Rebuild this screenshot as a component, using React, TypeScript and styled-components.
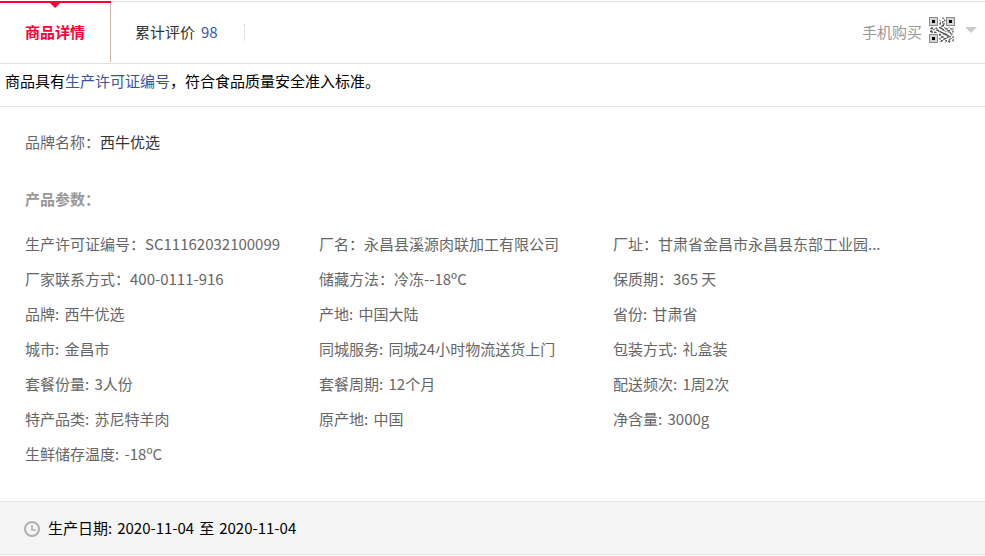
import React from 'react';
import styled, { createGlobalStyle } from 'styled-components';

const GlobalStyle = createGlobalStyle`
  * { box-sizing: border-box; }
  body {
    margin: 0;
    background: #fff;
    color: #000;
    font: 15px/20px 'Noto Sans CJK SC', 'Noto Sans', sans-serif;
  }
  button { font: inherit; background: none; border: 0; padding: 0; cursor: pointer; }
  a { text-decoration: none; }
`;

const Page = styled.main`
  padding-top: 1px;
`;

const TabBar = styled.nav`
  display: flex;
  height: 63px;
  border-top: 1px solid #e0e0e0;
  border-bottom: 1px solid #e0e0e0;
`;

const ActiveTab = styled.button`
  position: relative;
  width: 111px;
  margin-top: -1px;
  && {
    padding: 0 1px 2px 0;
    border-top: 2px solid #ff0036;
    color: #ff0036;
    font-weight: 700;
  }
  &::before {
    content: '';
    position: absolute;
    top: 0;
    left: 50%;
    margin-left: -6px;
    border: 5px solid transparent;
    border-top-color: #ff0036;
    border-bottom: 0;
  }
  &::after {
    content: '';
    position: absolute;
    top: 1px;
    right: 0;
    bottom: 1px;
    width: 1px;
    background: #cbb8ab;
  }
`;

const Tab = styled.button`
  display: flex;
  gap: 6px;
  align-items: center;
  align-self: center;
  height: 18px;
  && {
    padding: 0 26px 2px 24px;
    color: #333;
    border-right: 1px dotted #ccc;
  }
`;

const Count = styled.span`
  color: #38549f;
`;

const PhoneBuy = styled.button`
  display: flex;
  align-items: center;
  margin-left: auto;
  && {
    padding: 0 8px 2px 0;
    color: #999;
  }
`;

const QrIcon = styled.svg`
  width: 26px;
  height: 26px;
  margin: 0 10px 3px 7px;
`;

const Caret = styled.span`
  margin-bottom: 3px;
  border: 6px solid transparent;
  border-top-color: #ccc;
  border-bottom: 0;
`;

const Notice = styled.p`
  margin: 0;
  padding: 7px 5px 15px;
  border-bottom: 1px solid #e6e6e6;
`;

const NoticeLink = styled.a`
  color: #38549f;
`;

const Details = styled.section`
  padding: 25px 25px 30px;
  color: #666;
`;

const Brand = styled.p`
  margin: 0 0 37px;
`;

const BrandName = styled.span`
  color: #333;
`;

const Heading = styled.h2`
  margin: 0 0 17px;
  color: #999;
  font-size: 15px;
  line-height: 20px;
`;

const Params = styled.ul`
  display: grid;
  grid-template-columns: repeat(3, minmax(0, 270px));
  column-gap: 24px;
  margin: 0;
  padding: 0;
  list-style: none;
`;

const Param = styled.li`
  height: 35px;
  line-height: 35px;
  overflow: hidden;
  white-space: nowrap;
`;

const Value = styled.span<{ $spaced: boolean }>`
  margin-left: ${(p) => (p.$spaced ? '2px' : '0')};
`;

const DateBar = styled.footer`
  display: flex;
  align-items: center;
  gap: 8px;
  height: 54px;
  padding: 0 24px;
  border-top: 1px solid #e6e6e6;
  border-bottom: 1px solid #e6e6e6;
  background: #f5f5f5;
`;

const ClockIcon = styled.svg`
  width: 16px;
  height: 16px;
  margin-top: 2px;
`;

const DateText = styled.p`
  display: flex;
  gap: 5px;
  margin: 0;
`;

const params: [string, string][] = [
  ['生产许可证编号：', 'SC11162032100099'],
  ['厂名：', '永昌县溪源肉联加工有限公司'],
  ['厂址：', '甘肃省金昌市永昌县东部工业园...'],
  ['厂家联系方式：', '400-0111-916'],
  ['储藏方法：', '冷冻--18ºC'],
  ['保质期：', '365 天'],
  ['品牌: ', '西牛优选'],
  ['产地: ', '中国大陆'],
  ['省份: ', '甘肃省'],
  ['城市: ', '金昌市'],
  ['同城服务: ', '同城24小时物流送货上门'],
  ['包装方式: ', '礼盒装'],
  ['套餐份量: ', '3人份'],
  ['套餐周期: ', '12个月'],
  ['配送频次: ', '1周2次'],
  ['特产品类: ', '苏尼特羊肉'],
  ['原产地: ', '中国'],
  ['净含量: ', '3000g'],
  ['生鲜储存温度: ', '-18ºC'],
];

/* Each digit is the darkness of one cell, 0 (blank) to 5 (black). */
const qrRows = [
  '00000000000002200000000000',
  '00000000000003310000000000',
  '00000000001100120000000000',
  '00000000002200042000000000',
  '00000000000103320000000000',
  '00000000001304100000000000',
  '00000000003402330000000000',
  '00000000002301420000000000',
  '00000000000024410000000000',
  '00000000001133200000000000',
  '01330012004420031002200110',
  '03441134201343014411033220',
  '01123302310024402330023310',
  '02401103442001330134401200',
  '04430220133420013223310330',
  '01330443001344210012340220',
  '00000000002013443200133100',
  '00000000004401234420023300',
  '00000000003310012344102000',
  '00000000000034200133440230',
  '00000000001143310243210330',
  '00000000003300244300133100',
  '00000000002201332001420230',
  '00000000000044103402310330',
  '00000000001332002304410120',
  '00000000000110012001300000',
];

const darkness = ['none', '#e2e2e2', '#bcbcbc', '#8c8c8c', '#565656'];

const finders = [
  [0, 0],
  [17, 0],
  [0, 17],
];

function QrCode() {
  return (
    <QrIcon viewBox="0 0 26 26" aria-hidden="true">
      {darkness.slice(1).map((fill, i) => (
        <path
          key={fill}
          fill={fill}
          d={qrRows
            .flatMap((row, y) => [...row].map((c, x) => (Number(c) === i + 1 ? `M${x} ${y}h1v1h-1z` : '')))
            .join('')}
        />
      ))}
      {finders.map(([x, y]) => (
        <g key={`${x}-${y}`}>
          <rect x={x + 0.5} y={y + 0.5} width="8" height="8" fill="#d4d4d4" stroke="#8c8c8c" />
          <rect x={x + 3} y={y + 3} width="3" height="3" fill="#000" />
        </g>
      ))}
    </QrIcon>
  );
}

export default function App() {
  return (
    <Page>
      <GlobalStyle />
      <TabBar>
        <ActiveTab type="button">商品详情</ActiveTab>
        <Tab type="button">
          累计评价 <Count>98</Count>
        </Tab>
        <PhoneBuy type="button">
          手机购买
          <QrCode />
          <Caret />
        </PhoneBuy>
      </TabBar>
      <Notice>
        商品具有<NoticeLink href="#license">生产许可证编号</NoticeLink>，符合食品质量安全准入标准。
      </Notice>
      <Details>
        <Brand>
          品牌名称：<BrandName>西牛优选</BrandName>
        </Brand>
        <Heading>产品参数：</Heading>
        <Params>
          {params.map(([label, value]) => (
            <Param key={label}>
              {label}
              <Value $spaced={label.endsWith(' ')}>{value}</Value>
            </Param>
          ))}
        </Params>
      </Details>
      <DateBar>
        <ClockIcon viewBox="0 0 16 16" fill="none" stroke="#b0b0b0" aria-hidden="true">
          <circle cx="8" cy="8" r="7" strokeWidth="2" />
          <path d="M8 4v5h4" strokeWidth="1.6" />
        </ClockIcon>
        <DateText>
          <span>生产日期:</span> <time>2020-11-04</time> <span>至</span> <time>2020-11-04</time>
        </DateText>
      </DateBar>
    </Page>
  );
}
